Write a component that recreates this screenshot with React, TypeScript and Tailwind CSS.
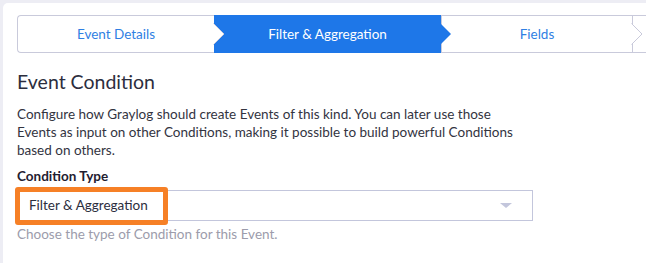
const Chevron = ({ fill, stroke }: { fill: string; stroke?: string }) => (
  <svg
    className="absolute right-[-11px] top-1/2 z-10 -translate-y-1/2"
    width="12"
    height="22"
    viewBox="0 0 12 22"
  >
    <polygon points="0,0 11,11 0,22" fill={fill} />
    {stroke && <polyline points="0.5,0.5 11,11 0.5,21.5" fill="none" stroke={stroke} strokeWidth="1" />}
  </svg>
);

const steps = [
  { label: "Event Details", width: "w-[196px]", active: false },
  { label: "Filter & Aggregation", width: "w-[227px]", active: true },
  { label: "Fields", width: "w-[191px]", active: false },
];

export default function App() {
  return (
    <div
      className="h-[263px] w-[646px] overflow-hidden bg-[#ededf4] pl-[3px] pt-[3px]"
      style={{ fontFamily: "Lato, 'Liberation Sans', sans-serif" }}
    >
      <div className="h-full rounded-tl-[5px] bg-white pl-[14px] pt-[12px]">
        {/* stepper */}
        <div className="flex h-[38px] rounded-l-[4px] border-y border-l border-[#c9cadb] text-[13.5px]">
          {steps.map((s, i) => (
            <div
              key={s.label}
              className={`relative flex shrink-0 items-center justify-center ${s.width} ${
                s.active
                  ? "-my-px bg-[#1e77e8] text-white"
                  : i === 0
                    ? "rounded-l-[4px] text-[#2f7fe3]"
                    : "border-l border-[#c9cadb] text-[#2f7fe3]"
              }`}
            >
              {s.label}
              {s.active ? <Chevron fill="#1e77e8" /> : <Chevron fill="#ffffff" stroke="#c9cadb" />}
            </div>
          ))}
          <div className="flex-1 border-l border-[#c9cadb]" />
        </div>

        <h2 className="mt-[17px] text-[19.5px] leading-[24px] text-[#2c2e3e]">Event Condition</h2>
        <p className="mt-[11px] text-[13.5px] leading-[18px] text-[#33343f]">
          Configure how Graylog should create Events of this kind. You can later use those
          <br />
          Events as input on other Conditions, making it possible to build powerful Conditions
          <br />
          based on others.
        </p>

        <label className="mt-[8px] block text-[13.5px] font-bold leading-[18px] text-[#1f2030]">
          Condition Type
        </label>
        <div className="relative mt-[5px] flex h-[31px] w-[516px] items-center justify-between border border-[#c3c6dc] pl-[11px] pr-[20px] text-[13.5px] text-[#2c2e3e]">
          <span>Filter &amp; Aggregation</span>
          <span className="h-0 w-0 border-x-[6px] border-t-[5px] border-x-transparent border-t-[#c3c6dc]" />
          <div className="pointer-events-none absolute left-[-3px] top-[-4px] h-[38px] w-[153px] rounded-[3px] border-[5px] border-[#f68026]" />
        </div>
        <p className="mt-[4px] text-[13.5px] leading-[18px] text-[#9c9cab]">
          Choose the type of Condition for this Event.
        </p>
      </div>
    </div>
  );
}
